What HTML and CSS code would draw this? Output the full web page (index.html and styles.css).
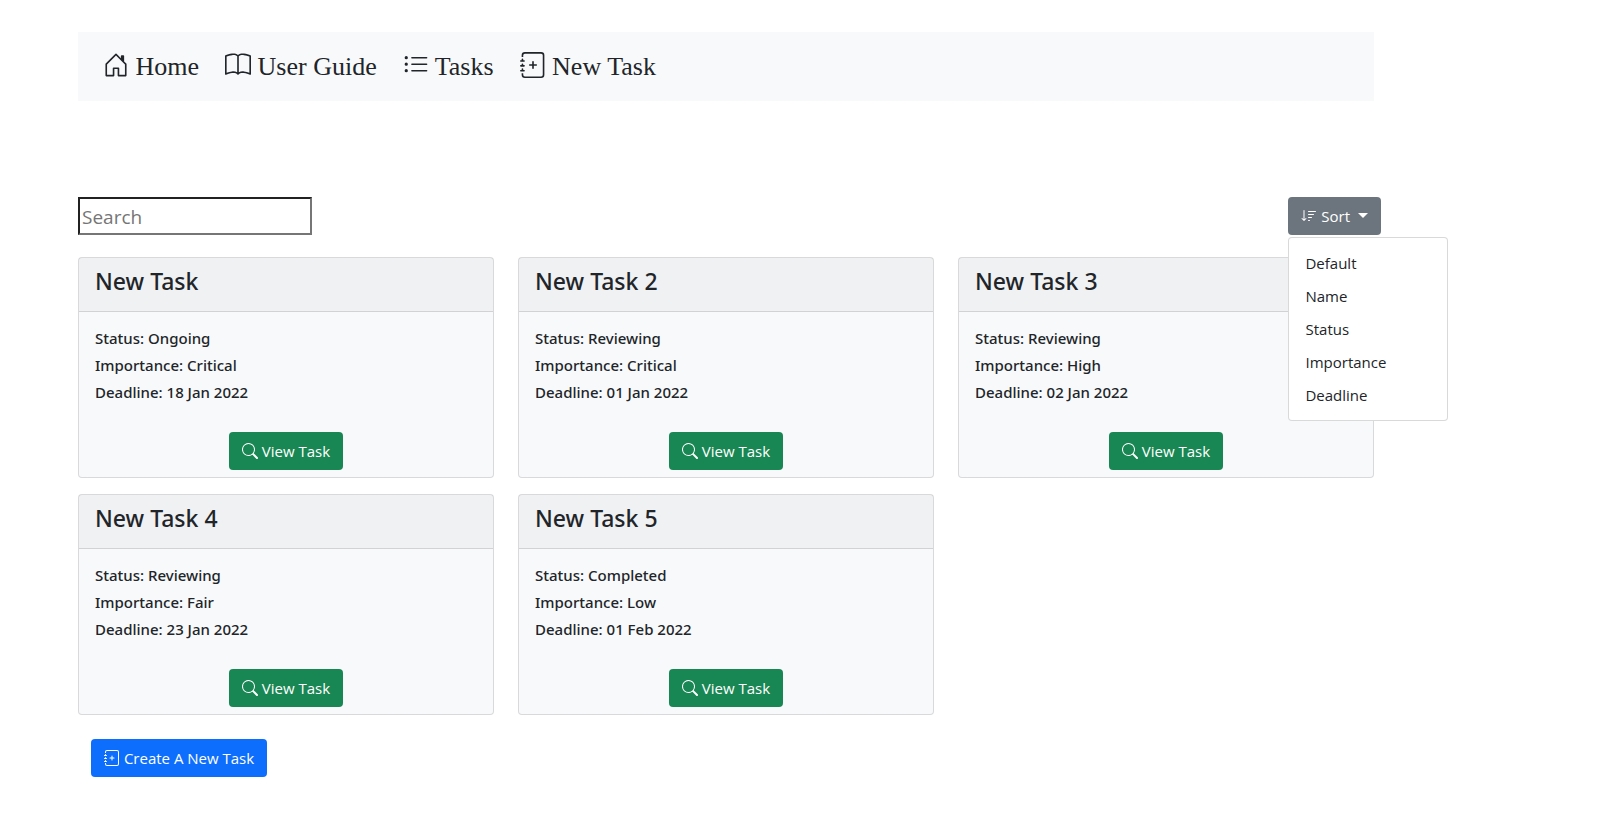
FILE: index.html
```html
<!DOCTYPE html>
<html lang="en">
<head>
<meta charset="utf-8">
<meta name="viewport" content="width=device-width, initial-scale=1">
<title>Tasks</title>
<link rel="stylesheet" href="styles.css">
</head>
<body>
<svg class="sprite" aria-hidden="true">
  <symbol id="house-door" viewBox="0 0 16 16">
    <path d="M8.354 1.146a.5.5 0 0 0-.708 0l-6 6A.5.5 0 0 0 1.500 7.500v7a.5.5 0 0 0 .5.5h4.500a.5.5 0 0 0 .5-.5v-4h2v4a.5.5 0 0 0 .5.5H14a.5.5 0 0 0 .5-.5v-7a.5.5 0 0 0-.146-.354L13 5.793V2.500a.5.5 0 0 0-.5-.5h-1a.5.5 0 0 0-.5.5v1.293L8.354 1.146zM2.500 14V7.707l5.500-5.500 5.500 5.500V14H10v-4a.5.5 0 0 0-.5-.5h-3a.5.5 0 0 0-.5.5v4H2.500z"/>
  </symbol>
  <symbol id="book" viewBox="0 0 16 16">
    <path d="M1 2.828c.885-.37 2.154-.769 3.388-.893 1.330-.134 2.458.063 3.112.752v9.746c-.935-.53-2.120-.603-3.213-.493-1.180.12-2.370.461-3.287.811V2.828zm7.500-.141c.654-.689 1.782-.886 3.112-.752 1.234.124 2.503.523 3.388.893v9.923c-.918-.35-2.107-.692-3.287-.81-1.094-.111-2.278-.039-3.213.492V2.687zM8 1.783C7.015.936 5.587.81 4.287.94c-1.514.153-3.042.672-3.994 1.105A.5.5 0 0 0 0 2.500v11a.5.5 0 0 0 .707.455c.882-.4 2.303-.881 3.680-1.020 1.409-.142 2.590.087 3.223.877a.5.5 0 0 0 .78 0c.633-.79 1.814-1.019 3.222-.877 1.378.139 2.800.62 3.681 1.020A.5.5 0 0 0 16 13.500v-11a.5.5 0 0 0-.293-.455c-.952-.433-2.480-.952-3.994-1.105C10.413.809 8.985.936 8 1.783z"/>
  </symbol>
  <symbol id="list" viewBox="0 0 16 16">
    <path fill-rule="evenodd" d="M5 11.500a.5.5 0 0 1 .5-.5h9a.5.5 0 0 1 0 1h-9a.5.5 0 0 1-.5-.5zm0-4a.5.5 0 0 1 .5-.5h9a.5.5 0 0 1 0 1h-9a.5.5 0 0 1-.5-.5zm0-4a.5.5 0 0 1 .5-.5h9a.5.5 0 0 1 0 1h-9a.5.5 0 0 1-.5-.5zm-3 1a1 1 0 1 0 0-2 1 1 0 0 0 0 2zm0 4a1 1 0 1 0 0-2 1 1 0 0 0 0 2zm0 4a1 1 0 1 0 0-2 1 1 0 0 0 0 2z"/>
  </symbol>
  <symbol id="journal-plus" viewBox="0 0 16 16">
    <path fill-rule="evenodd" d="M8 5.500a.5.5 0 0 1 .5.5v1.500H10a.5.5 0 0 1 0 1H8.500V10a.5.5 0 0 1-1 0V8.500H6a.5.5 0 0 1 0-1h1.500V6a.5.5 0 0 1 .5-.5z"/>
    <path d="M3 0h10a2 2 0 0 1 2 2v12a2 2 0 0 1-2 2H3a2 2 0 0 1-2-2v-1h1v1a1 1 0 0 0 1 1h10a1 1 0 0 0 1-1V2a1 1 0 0 0-1-1H3a1 1 0 0 0-1 1v1H1V2a2 2 0 0 1 2-2z"/>
    <path d="M1 5v-.5a.5.5 0 0 1 1 0V5h.5a.5.5 0 0 1 0 1h-2a.5.5 0 0 1 0-1H1zm0 3v-.5a.5.5 0 0 1 1 0V8h.5a.5.5 0 0 1 0 1h-2a.5.5 0 0 1 0-1H1zm0 3v-.5a.5.5 0 0 1 1 0v.5h.5a.5.5 0 0 1 0 1h-2a.5.5 0 0 1 0-1H1z"/>
  </symbol>
  <symbol id="search" viewBox="0 0 16 16">
    <path d="M11.742 10.344a6.500 6.500 0 1 0-1.397 1.398h-.001c.03.04.062.078.098.115l3.850 3.850a1 1 0 0 0 1.415-1.414l-3.850-3.850a1.007 1.007 0 0 0-.115-.1zM12 6.500a5.500 5.500 0 1 1-11 0 5.500 5.500 0 0 1 11 0z"/>
  </symbol>
  <symbol id="sort-down" viewBox="0 0 16 16">
    <path d="M3.500 2.500a.5.5 0 0 0-1 0v8.793l-1.146-1.147a.5.5 0 0 0-.708.708l2 1.999.007.007a.497.497 0 0 0 .7-.006l2-2a.5.5 0 0 0-.707-.708L3.500 11.293V2.500zm3.500 1a.5.5 0 0 1 .5-.5h7a.5.5 0 0 1 0 1h-7a.5.5 0 0 1-.5-.5zM7.500 6a.5.5 0 0 0 0 1h5a.5.5 0 0 0 0-1h-5zm0 3a.5.5 0 0 0 0 1h3a.5.5 0 0 0 0-1h-3zm0 3a.5.5 0 0 0 0 1h1a.5.5 0 0 0 0-1h-1z"/>
  </symbol>
</svg>

<div class="page">
  <nav class="navbar" aria-label="Main">
    <a class="nav-link" href="#home"><svg class="icon"><use href="#house-door"/></svg> Home</a>
    <a class="nav-link" href="#guide"><svg class="icon"><use href="#book"/></svg> User Guide</a>
    <a class="nav-link" href="#tasks"><svg class="icon"><use href="#list"/></svg> Tasks</a>
    <a class="nav-link" href="#new"><svg class="icon"><use href="#journal-plus"/></svg> New Task</a>
  </nav>

  <main>
    <div class="toolbar">
      <input class="search" type="search" placeholder="Search" aria-label="Search">
      <div class="dropdown">
        <button class="btn btn-secondary" type="button" aria-expanded="true" aria-controls="sort-menu"><svg class="icon"><use href="#sort-down"/></svg> Sort <span class="caret"></span></button>
        <div class="menu" id="sort-menu">
          <a class="menu-item" href="#default">Default</a>
          <a class="menu-item" href="#name">Name</a>
          <a class="menu-item" href="#status">Status</a>
          <a class="menu-item" href="#importance">Importance</a>
          <a class="menu-item" href="#deadline">Deadline</a>
        </div>
      </div>
    </div>

    <div class="cards">
      <article class="card">
        <h2 class="card-header">New Task</h2>
        <div class="card-body">
          <p>Status: Ongoing</p>
          <p>Importance: Critical</p>
          <p>Deadline: 18 Jan 2022</p>
        </div>
        <button class="btn btn-success" type="button"><svg class="icon"><use href="#search"/></svg> View Task</button>
      </article>
      <article class="card">
        <h2 class="card-header">New Task 2</h2>
        <div class="card-body">
          <p>Status: Reviewing</p>
          <p>Importance: Critical</p>
          <p>Deadline: 01 Jan 2022</p>
        </div>
        <button class="btn btn-success" type="button"><svg class="icon"><use href="#search"/></svg> View Task</button>
      </article>
      <article class="card">
        <h2 class="card-header">New Task 3</h2>
        <div class="card-body">
          <p>Status: Reviewing</p>
          <p>Importance: High</p>
          <p>Deadline: 02 Jan 2022</p>
        </div>
        <button class="btn btn-success" type="button"><svg class="icon"><use href="#search"/></svg> View Task</button>
      </article>
      <article class="card">
        <h2 class="card-header">New Task 4</h2>
        <div class="card-body">
          <p>Status: Reviewing</p>
          <p>Importance: Fair</p>
          <p>Deadline: 23 Jan 2022</p>
        </div>
        <button class="btn btn-success" type="button"><svg class="icon"><use href="#search"/></svg> View Task</button>
      </article>
      <article class="card">
        <h2 class="card-header">New Task 5</h2>
        <div class="card-body">
          <p>Status: Completed</p>
          <p>Importance: Low</p>
          <p>Deadline: 01 Feb 2022</p>
        </div>
        <button class="btn btn-success" type="button"><svg class="icon"><use href="#search"/></svg> View Task</button>
      </article>
    </div>

    <div class="actions">
      <button class="btn btn-primary" type="button"><svg class="icon"><use href="#journal-plus"/></svg> Create A New Task</button>
    </div>
  </main>
</div>
</body>
</html>
```
FILE: styles.css
```css
*,
*::before,
*::after {
  box-sizing: border-box;
}

body {
  margin: 0;
  background: #fff;
  color: #212529;
  font: 15px/24px "Segoe UI", "Open Sans", sans-serif;
}

.sprite {
  display: none;
}

.icon {
  width: 1em;
  height: 1em;
  fill: currentColor;
  vertical-align: -0.125em;
}

.page {
  max-width: 1374px;
  padding: 32px 0 32px 78px;
}

.navbar {
  display: flex;
  flex-wrap: wrap;
  gap: 0 26px;
  padding: 15px 25px 14px;
  background: #f8f9fb;
  font: 26px/40px "Liberation Serif", "Times New Roman", serif;
}

.nav-link {
  color: inherit;
  text-decoration: none;
}

.toolbar {
  display: flex;
  justify-content: space-between;
  margin: 96px -7px 22px 0;
}

.search {
  width: 234px;
  height: 38px;
  padding: 2px 2px 0;
  border: 2px inset #767676;
  border-radius: 0;
  background: #fff;
  font: 19px/30px "Segoe UI", "Open Sans", sans-serif;
  appearance: none;
}

.search::placeholder {
  color: #757575;
}

.btn {
  padding: 6px 12px;
  border: 1px solid transparent;
  border-radius: 4px;
  color: #fff;
  font: inherit;
  white-space: nowrap;
  cursor: pointer;
}

.btn .icon {
  width: 16px;
  height: 16px;
}

.btn-primary {
  background: #0d6efd;
}

.btn-secondary {
  background: #6c757d;
}

.btn-success {
  background: #198754;
}

.dropdown {
  position: relative;
}

.dropdown .btn {
  display: block;
}

.caret {
  display: inline-block;
  margin-left: 4px;
  border: 5px solid transparent;
  border-top-color: currentColor;
  border-bottom: 0;
  vertical-align: 4px;
}

.menu {
  position: absolute;
  top: 100%;
  left: 0;
  z-index: 1;
  min-width: 160px;
  margin-top: 2px;
  padding: 8px 0 9px;
  border: 1px solid rgba(0, 0, 0, 0.15);
  border-radius: 4px;
  background: #fff;
}

.menu-item {
  display: block;
  padding: 5px 16px 4px;
  color: inherit;
  text-decoration: none;
}

.cards {
  display: grid;
  grid-template-columns: repeat(3, 1fr);
  gap: 16px 24px;
}

.card {
  display: flex;
  flex-direction: column;
  align-items: center;
  padding-bottom: 7px;
  border: 1px solid rgba(0, 0, 0, 0.125);
  border-radius: 4px;
  background: #f8f9fb;
}

.card-header {
  align-self: stretch;
  margin: 0;
  padding: 9px 16px 15px;
  border-bottom: 1px solid rgba(0, 0, 0, 0.125);
  background: rgba(0, 0, 0, 0.03);
  font-family: "Segoe UI", "Noto Sans", sans-serif;
  font-size: 23px;
  font-weight: 500;
  line-height: 29px;
}

.card-body {
  align-self: stretch;
  padding: 13px 16px 26px;
  font-family: "Segoe UI", "Noto Sans", sans-serif;
  font-weight: 500;
}

.card-body p {
  margin: 0;
  line-height: 27px;
}

.actions {
  padding: 24px 13px;
}
```
